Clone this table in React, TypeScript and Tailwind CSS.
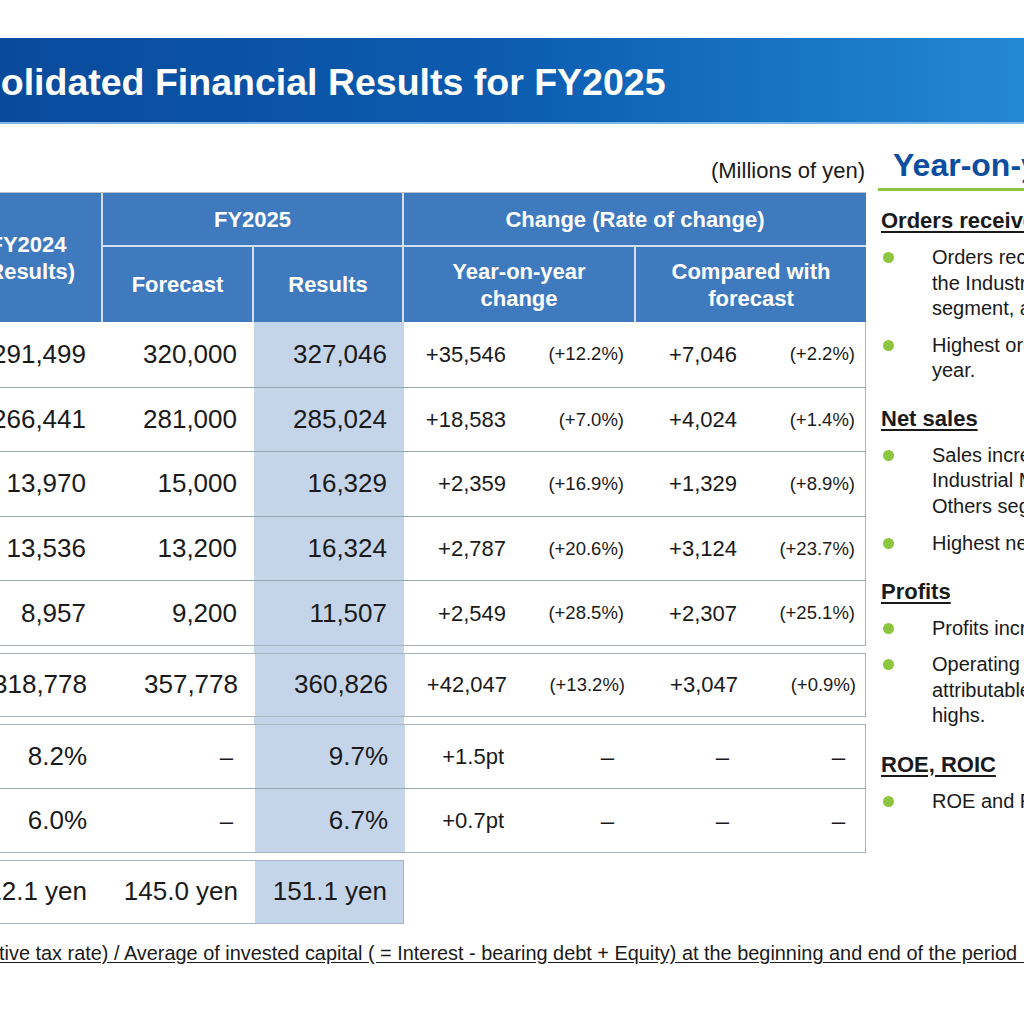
import React from "react";

const rows = [
  { a: "291,499", b: "320,000", c: "327,046", d: "+35,546", e: "(+12.2%)", f: "+7,046", g: "(+2.2%)" },
  { a: "266,441", b: "281,000", c: "285,024", d: "+18,583", e: "(+7.0%)", f: "+4,024", g: "(+1.4%)" },
  { a: "13,970", b: "15,000", c: "16,329", d: "+2,359", e: "(+16.9%)", f: "+1,329", g: "(+8.9%)" },
  { a: "13,536", b: "13,200", c: "16,324", d: "+2,787", e: "(+20.6%)", f: "+3,124", g: "(+23.7%)" },
  { a: "8,957", b: "9,200", c: "11,507", d: "+2,549", e: "(+28.5%)", f: "+2,307", g: "(+25.1%)" },
];

const cols = "grid grid-cols-[148px_151px_150px_119px_113px_119px_111px]";

function Dash({ pr }: { pr: string }) {
  return <div className={`flex items-center justify-end text-[24px] ${pr}`}>–</div>;
}

function Gap() {
  return (
    <div className={`${cols} h-[7px]`}>
      <div />
      <div />
      <div className="bg-[#c4d5ea]" />
    </div>
  );
}

function Bullet({ lines }: { lines: string[] }) {
  return (
    <div className="relative pl-[54px] text-[20px] leading-[25.5px] text-[#1a1a1a] whitespace-nowrap">
      <span className="absolute left-[5px] top-[7px] w-[11px] h-[11px] rounded-full bg-[#8cc63f]" />
      {lines.map((l, i) => (
        <div key={i}>{l}</div>
      ))}
    </div>
  );
}

function SectionHead({ children }: { children: React.ReactNode }) {
  return (
    <div className="pl-[3px] text-[22px] leading-[26px] font-bold underline underline-offset-[3px] text-[#1a1a1a] whitespace-nowrap">
      {children}
    </div>
  );
}

export default function App() {
  return (
    <div className="w-[1024px] h-[1024px] overflow-hidden bg-white font-['Liberation_Sans',Arial,sans-serif] text-[#1a1a1a]">
      <div className="h-[38px]" />
      <div className="h-[86px] flex items-center bg-gradient-to-r from-[#0a4a9c] via-[#0c5cb0] to-[#2388d6] border-b-2 border-[#7fb6e6]">
        <h1 className="-ml-[93px] mt-[4px] text-[37.5px] font-bold text-white whitespace-nowrap">
          Consolidated Financial Results for FY2025
        </h1>
      </div>

      <div className="flex">
        {/* table side */}
        <div className="-ml-[45px] w-[911px] shrink-0">
          <div className="mt-[33px] h-[28px] text-right text-[22px] leading-[28px] pr-[1px]">(Millions of yen)</div>
          <div className="mt-[7px] grid grid-cols-[148px_151px_150px_119px_113px_119px_111px] grid-rows-[54px_75px] bg-[#3f7abf] border-t border-[#b9c3d0] text-white font-bold text-[22px] leading-[27px]">
            <div className="row-span-2 border-r-2 border-[#d2deef] flex flex-col items-center justify-center text-center">
              <div>FY2024</div>
              <div>(Results)</div>
            </div>
            <div className="col-span-2 border-r-2 border-b-2 border-[#d2deef] flex items-center justify-center">FY2025</div>
            <div className="col-span-4 border-b-2 border-[#d2deef] flex items-center justify-center">Change (Rate of change)</div>
            <div className="border-r-2 border-[#d2deef] flex items-center justify-center">Forecast</div>
            <div className="border-r-2 border-[#d2deef] flex items-center justify-center">Results</div>
            <div className="col-span-2 border-r-2 border-[#d2deef] flex flex-col items-center justify-center text-center">
              <div>Year-on-year</div>
              <div>change</div>
            </div>
            <div className="col-span-2 flex flex-col items-center justify-center text-center">
              <div>Compared with</div>
              <div>forecast</div>
            </div>
          </div>

          {/* main rows */}
          <div className="border-r border-b border-[#a9b2bd]">
            {rows.map((r, i) => (
              <div key={i} className={`${cols} h-[64.6px] ${i > 0 ? "border-t border-[#98a4b2]" : ""}`}>
                <div className="flex items-center justify-end pr-[17px] text-[26px]">{r.a}</div>
                <div className="flex items-center justify-end pr-[17px] text-[26px]">{r.b}</div>
                <div className="flex items-center justify-end pr-[17px] text-[26px] bg-[#c4d5ea]">{r.c}</div>
                <div className="flex items-center justify-end pr-[17px] text-[22px]">{r.d}</div>
                <div className="flex items-center justify-end pr-[12px] text-[18.5px]">{r.e}</div>
                <div className="flex items-center justify-end pr-[18px] text-[22px]">{r.f}</div>
                <div className="flex items-center justify-end pr-[11px] text-[18.5px]">{r.g}</div>
              </div>
            ))}
          </div>
          <Gap />
          <div className="border border-[#a9b2bd]">
            <div className={`${cols} h-[62px]`}>
              <div className="flex items-center justify-end pr-[17px] text-[26px]">318,778</div>
              <div className="flex items-center justify-end pr-[17px] text-[26px]">357,778</div>
              <div className="flex items-center justify-end pr-[17px] text-[26px] bg-[#c4d5ea]">360,826</div>
              <div className="flex items-center justify-end pr-[17px] text-[22px]">+42,047</div>
              <div className="flex items-center justify-end pr-[12px] text-[18.5px]">(+13.2%)</div>
              <div className="flex items-center justify-end pr-[18px] text-[22px]">+3,047</div>
              <div className="flex items-center justify-end pr-[11px] text-[18.5px]">(+0.9%)</div>
            </div>
          </div>
          <Gap />
          <div className="border border-[#a9b2bd]">
            {[
              { a: "8.2%", c: "9.7%", d: "+1.5pt" },
              { a: "6.0%", c: "6.7%", d: "+0.7pt" },
            ].map((r, i) => (
              <div key={i} className={`${cols} h-[63.5px] ${i > 0 ? "border-t border-[#98a4b2]" : ""}`}>
                <div className="flex items-center justify-end pr-[17px] text-[26px]">{r.a}</div>
                <Dash pr="pr-[22px]" />
                <div className="flex items-center justify-end pr-[17px] text-[26px] bg-[#c4d5ea]">{r.c}</div>
                <div className="flex items-center justify-end pr-[20px] text-[22px]">{r.d}</div>
                <Dash pr="pr-[23px]" />
                <Dash pr="pr-[27px]" />
                <Dash pr="pr-[22px]" />
              </div>
            ))}
          </div>
          <div className="h-[7px]" />
          <div className="w-[449px] border border-[#a9b2bd]">
            <div className="grid grid-cols-[148px_151px_148px] h-[62px]">
              <div className="flex items-center justify-end pr-[17px] text-[26px]">112.1 yen</div>
              <div className="flex items-center justify-end pr-[17px] text-[26px]">145.0 yen</div>
              <div className="flex items-center justify-end pr-[16px] text-[26px] bg-[#c4d5ea]">151.1 yen</div>
            </div>
          </div>
        </div>

        {/* commentary side */}
        <div className="ml-[12px] flex-1 min-w-0 overflow-hidden">
          <div className="mt-[23px] pl-[15px] text-[32px] leading-[36px] font-bold text-[#0d4ea0] whitespace-nowrap">
            Year-on-year comparison
          </div>
          <div className="mt-[5px] h-[3px] bg-[#8cc63f]" />
          <div className="mt-[17px]">
            <SectionHead>Orders received</SectionHead>
            <div className="mt-[11px]">
              <Bullet lines={["Orders received increased mainly in", "the Industrial Machinery & Equipment", "segment, and Others segment."]} />
            </div>
            <div className="mt-[11px]">
              <Bullet lines={["Highest orders received for the fiscal", "year."]} />
            </div>
            <div className="mt-[22px]">
              <SectionHead>Net sales</SectionHead>
            </div>
            <div className="mt-[11px]">
              <Bullet lines={["Sales increased mainly in the", "Industrial Machinery & Equipment and", "Others segments."]} />
            </div>
            <div className="mt-[12px]">
              <Bullet lines={["Highest net sales for the fiscal year."]} />
            </div>
            <div className="mt-[22px]">
              <SectionHead>Profits</SectionHead>
            </div>
            <div className="mt-[11px]">
              <Bullet lines={["Profits increased in all categories."]} />
            </div>
            <div className="mt-[11px]">
              <Bullet lines={["Operating income and profit", "attributable to owners of parent hit record", "highs."]} />
            </div>
            <div className="mt-[23px]">
              <SectionHead>ROE, ROIC</SectionHead>
            </div>
            <div className="mt-[11px]">
              <Bullet lines={["ROE and ROIC improved."]} />
            </div>
          </div>
        </div>
      </div>

      <div className="mt-[17px] -ml-[1px] text-[19.9px] leading-[24px] underline underline-offset-[2px] whitespace-nowrap">
        tive tax rate) / Average of invested capital ( = Interest - bearing debt + Equity) at the beginning and end of the period&nbsp;&nbsp;
      </div>
    </div>
  );
}
